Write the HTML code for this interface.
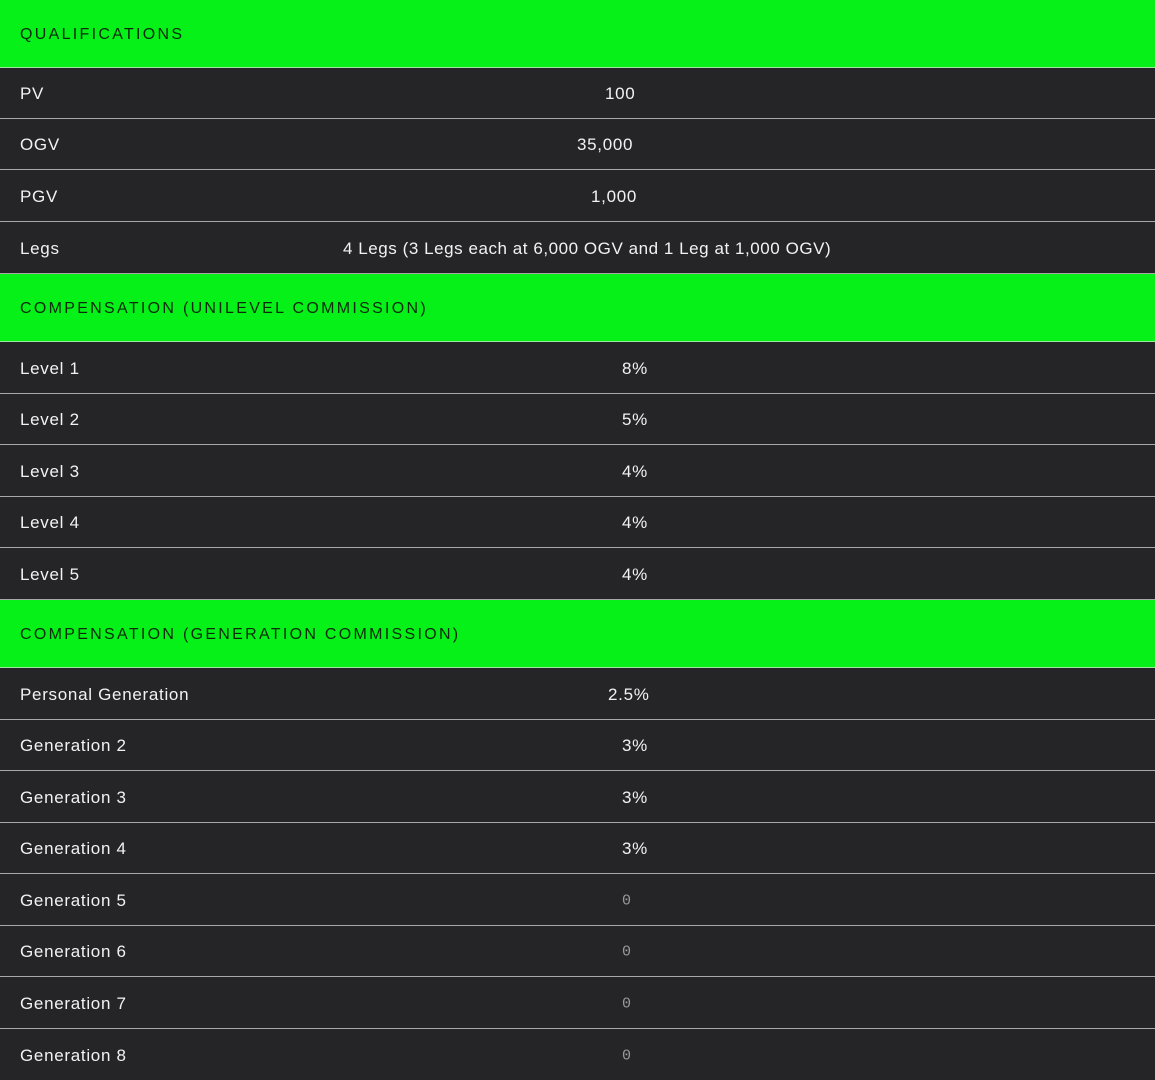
<!DOCTYPE html>
<html><head><meta charset="utf-8"><style>
body{margin:0;background:#252528;width:1155px;height:1079px;overflow:hidden;font-family:"Liberation Sans",sans-serif}
.h{position:absolute;left:0;width:1155px;background:#06f118;color:#0b2a0b;font-size:16px;letter-spacing:2.3px;box-sizing:border-box;padding-left:20px;padding-top:2px;border-bottom:1px solid #9fe89f}
.r{position:absolute;left:0;width:1155px;background:#252528;color:#f2f2f2;font-size:17px;letter-spacing:0.7px;border-bottom:1px solid #a8a8a8;box-sizing:border-box}
.r span{position:absolute;top:50%;transform:translateY(-45%);white-space:nowrap}
.a{left:20px}
.z{color:#9a9a9a;font-family:"Liberation Mono",monospace;font-size:15px;letter-spacing:0}
</style></head><body>
<div class="h" style="top:0;height:68px;line-height:66px">QUALIFICATIONS</div>
<div class="r" style="top:68px;height:51px"><span class="a">PV</span><span style="left:605px">100</span></div>
<div class="r" style="top:119px;height:51px"><span class="a">OGV</span><span style="left:577px">35,000</span></div>
<div class="r" style="top:170px;height:52px"><span class="a">PGV</span><span style="left:591px">1,000</span></div>
<div class="r" style="top:222px;height:52px"><span class="a">Legs</span><span style="left:343px;letter-spacing:0.55px">4 Legs (3 Legs each at 6,000 OGV and 1 Leg at 1,000 OGV)</span></div>
<div class="h" style="top:274px;height:68px;line-height:66px">COMPENSATION (UNILEVEL COMMISSION)</div>
<div class="r" style="top:342px;height:52px"><span class="a">Level 1</span><span style="left:622px">8%</span></div>
<div class="r" style="top:394px;height:51px"><span class="a">Level 2</span><span style="left:622px">5%</span></div>
<div class="r" style="top:445px;height:52px"><span class="a">Level 3</span><span style="left:622px">4%</span></div>
<div class="r" style="top:497px;height:51px"><span class="a">Level 4</span><span style="left:622px">4%</span></div>
<div class="r" style="top:548px;height:52px"><span class="a">Level 5</span><span style="left:622px">4%</span></div>
<div class="h" style="top:600px;height:68px;line-height:66px">COMPENSATION (GENERATION COMMISSION)</div>
<div class="r" style="top:668px;height:52px"><span class="a">Personal Generation</span><span style="left:608px">2.5%</span></div>
<div class="r" style="top:720px;height:51px"><span class="a">Generation 2</span><span style="left:622px">3%</span></div>
<div class="r" style="top:771px;height:52px"><span class="a">Generation 3</span><span style="left:622px">3%</span></div>
<div class="r" style="top:823px;height:51px"><span class="a">Generation 4</span><span style="left:622px">3%</span></div>
<div class="r" style="top:874px;height:52px"><span class="a">Generation 5</span><span class="z" style="left:622px">0</span></div>
<div class="r" style="top:926px;height:51px"><span class="a">Generation 6</span><span class="z" style="left:622px">0</span></div>
<div class="r" style="top:977px;height:52px"><span class="a">Generation 7</span><span class="z" style="left:622px">0</span></div>
<div class="r" style="top:1029px;height:51px;border-bottom:none"><span class="a">Generation 8</span><span class="z" style="left:622px">0</span></div>
</body></html>
